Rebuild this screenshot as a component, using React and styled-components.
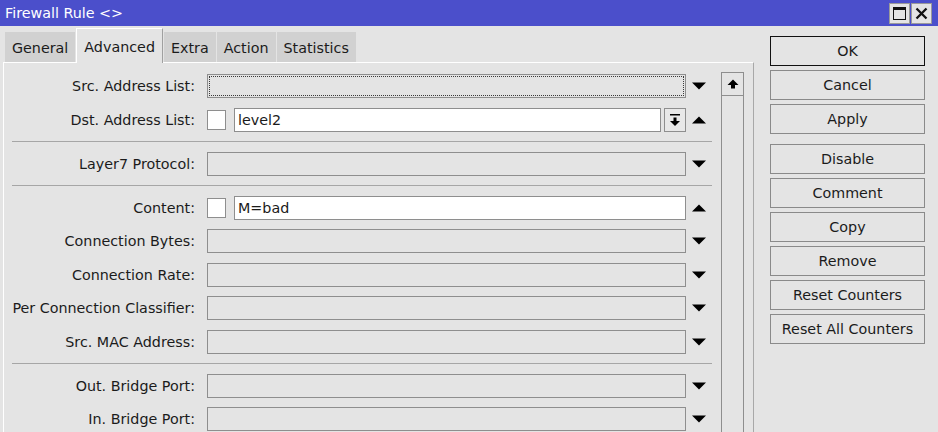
import React from "react";
import styled, { createGlobalStyle } from "styled-components";

const GlobalStyle = createGlobalStyle`
  * { box-sizing: border-box; }
  html, body { margin: 0; padding: 0; background: #e4e4e4; }
  body {
    font-family: "DejaVu Sans", Verdana, sans-serif;
    font-size: 14.3px;
    color: #1b1b1b;
  }
`;

const Window = styled.div`
  width: 938px;
  height: 432px;
  overflow: hidden;
  display: flex;
  flex-direction: column;
  background: #e4e4e4;
`;

const TitleBar = styled.div`
  flex: none;
  height: 26px;
  display: flex;
  align-items: center;
  justify-content: space-between;
  padding: 0 6px 0 5px;
  background: #4b4fcb;
`;

const Title = styled.span`
  color: #fff;
  font-size: 14.3px;
`;

const Controls = styled.div`
  display: flex;
  gap: 1px;
  padding-top: 1px;
`;

const ControlButton = styled.div`
  width: 21px;
  height: 21px;
  display: flex;
  align-items: center;
  justify-content: center;
  background: #e4e4e4;
  border: 1px solid #9a9a9a;
`;

const Body = styled.div`
  flex: 1;
  min-height: 0;
  display: flex;
  padding-left: 3px;
`;

const Main = styled.div`
  flex: none;
  width: 751px;
  display: flex;
  flex-direction: column;
`;

const Tabs = styled.div`
  position: relative;
  z-index: 1;
  height: 35px;
  margin: 2px 0 -1px;
  padding-left: 2px;
  display: flex;
  align-items: flex-end;
`;

const Tab = styled.div`
  height: ${(p) => (p.$active ? "35px" : "30px")};
  margin: 0 1px ${(p) => (p.$active ? "0" : "1px")} 0;
  padding: ${(p) => (p.$active ? "1px 7px 0" : "2px 7px 0")};
  display: flex;
  align-items: center;
  background: ${(p) => (p.$active ? "#e4e4e4" : "#d1d1d1")};
  border-top: ${(p) => (p.$active ? "1px solid #fff" : "none")};
  border-left: ${(p) => (p.$active ? "1px solid #fff" : "none")};
  border-right: ${(p) => (p.$active ? "1px solid #a0a0a0" : "none")};
  white-space: nowrap;
`;

const Panel = styled.div`
  flex: 1;
  min-height: 0;
  display: flex;
  padding-right: 9px;
  border-top: 1px solid #fff;
  border-left: 1px solid #fff;
  border-right: 1px solid #a8a8a8;
`;

const Form = styled.div`
  flex: none;
  width: 713px;
  padding-top: 11px;
  display: flex;
  flex-direction: column;
`;

const Group = styled.div`
  display: flex;
  flex-direction: column;
  gap: 9.5px;
`;

const Separator = styled.div`
  height: 1px;
  margin: 9.5px 5px 9.5px 8px;
  background: #a6a6a6;
`;

const RowBox = styled.div`
  height: 24px;
  display: flex;
  align-items: center;
`;

const Label = styled.div`
  flex: none;
  width: 191px;
  margin-right: 12px;
  text-align: right;
  white-space: nowrap;
`;

const Fields = styled.div`
  flex: none;
  width: 479px;
  height: 24px;
  display: flex;
  align-items: center;
`;

const Field = styled.div`
  flex: 1;
  height: 24px;
  padding: 0 3px;
  display: flex;
  align-items: center;
  background: ${(p) => (p.$editable ? "#fff" : "#e4e4e4")};
  border: 1px solid #8e8e8e;
  outline: ${(p) => (p.$focused ? "1px dotted #3a3a3a" : "none")};
  outline-offset: -3px;
`;

const Check = styled.div`
  flex: none;
  width: 19px;
  height: 20px;
  margin-right: 8px;
  background: #fff;
  border: 1px solid #8e8e8e;
`;

const ListButton = styled.div`
  flex: none;
  width: 22px;
  height: 24px;
  margin-left: 3px;
  display: flex;
  align-items: center;
  justify-content: center;
  background: #e8e8e8;
  border: 1px solid #8e8e8e;
`;

const Slot = styled.div`
  flex: none;
  width: 26px;
  display: flex;
  justify-content: center;
`;

const ScrollBar = styled.div`
  flex: none;
  width: 23px;
  margin: 9px 0 0 4px;
  display: flex;
  flex-direction: column;
`;

const ScrollButton = styled.div`
  height: 24px;
  display: flex;
  align-items: center;
  justify-content: center;
  border: 1px solid #8e8e8e;
`;

const Track = styled.div`
  flex: 1;
  border-left: 1px solid #8e8e8e;
  border-right: 1px solid #8e8e8e;
`;

const Actions = styled.div`
  flex: none;
  width: 155px;
  margin-left: 16px;
  padding-top: 10px;
  display: flex;
  flex-direction: column;
  gap: 10px;
`;

const ButtonGroup = styled.div`
  display: flex;
  flex-direction: column;
  gap: 4px;
`;

const Button = styled.div`
  height: 30px;
  display: flex;
  align-items: center;
  justify-content: center;
  background: #e4e4e4;
  border: 1px solid ${(p) => (p.$default ? "#111" : "#8a8a8a")};
  white-space: nowrap;
`;

const Arrow = ({ up }) => (
  <svg width="14" height="8" viewBox="0 0 14 8">
    <path d={up ? "M0 7.5 L7 0.5 L14 7.5 Z" : "M0 0.5 L14 0.5 L7 7.5 Z"} fill="#000" />
  </svg>
);

const DropAllIcon = () => (
  <svg width="12" height="14" viewBox="0 0 12 14">
    <rect x="1" y="1" width="10" height="1.5" fill="#000" />
    <rect x="4.5" y="4.5" width="3" height="4" fill="#000" />
    <path d="M1 8 L11 8 L6 13 Z" fill="#000" />
  </svg>
);

const ScrollUpIcon = () => (
  <svg width="12" height="10" viewBox="0 0 12 10">
    <path d="M6 0.5 L11.5 6 L8 6 L8 9.5 L4 9.5 L4 6 L0.5 6 Z" fill="#000" />
  </svg>
);

const MaximizeIcon = () => (
  <svg width="13" height="13" viewBox="0 0 13 13">
    <rect x="0.5" y="0.5" width="12" height="12" fill="none" stroke="#111" />
    <rect x="0.5" y="0.5" width="12" height="2.5" fill="#111" />
  </svg>
);

const CloseIcon = () => (
  <svg width="13" height="13" viewBox="0 0 13 13">
    <path d="M1.5 1.5 L11.5 11.5 M11.5 1.5 L1.5 11.5" stroke="#111" strokeWidth="2.3" />
  </svg>
);

const Row = ({ label, arrow, children }) => (
  <RowBox>
    <Label>{label}</Label>
    <Fields>{children}</Fields>
    <Slot>{arrow && <Arrow up={arrow === "up"} />}</Slot>
  </RowBox>
);

const tabs = ["General", "Advanced", "Extra", "Action", "Statistics"];

const blankRows = [
  "Connection Bytes:",
  "Connection Rate:",
  "Per Connection Classifier:",
  "Src. MAC Address:",
];

export default function App() {
  return (
    <>
      <GlobalStyle />
      <Window>
        <TitleBar>
          <Title>Firewall Rule &lt;&gt;</Title>
          <Controls>
            <ControlButton>
              <MaximizeIcon />
            </ControlButton>
            <ControlButton>
              <CloseIcon />
            </ControlButton>
          </Controls>
        </TitleBar>
        <Body>
          <Main>
            <Tabs>
              {tabs.map((t) => (
                <Tab key={t} $active={t === "Advanced"}>
                  {t}
                </Tab>
              ))}
            </Tabs>
            <Panel>
              <Form>
                <Group>
                  <Row label="Src. Address List:" arrow="down">
                    <Field $focused />
                  </Row>
                  <Row label="Dst. Address List:" arrow="up">
                    <Check />
                    <Field $editable>level2</Field>
                    <ListButton>
                      <DropAllIcon />
                    </ListButton>
                  </Row>
                </Group>
                <Separator />
                <Group>
                  <Row label="Layer7 Protocol:" arrow="down">
                    <Field />
                  </Row>
                </Group>
                <Separator />
                <Group>
                  <Row label="Content:" arrow="up">
                    <Check />
                    <Field $editable>M=bad</Field>
                  </Row>
                  {blankRows.map((label) => (
                    <Row key={label} label={label} arrow="down">
                      <Field />
                    </Row>
                  ))}
                </Group>
                <Separator />
                <Group>
                  <Row label="Out. Bridge Port:" arrow="down">
                    <Field />
                  </Row>
                  <Row label="In. Bridge Port:" arrow="down">
                    <Field />
                  </Row>
                </Group>
              </Form>
              <ScrollBar>
                <ScrollButton>
                  <ScrollUpIcon />
                </ScrollButton>
                <Track />
              </ScrollBar>
            </Panel>
          </Main>
          <Actions>
            <ButtonGroup>
              <Button $default>OK</Button>
              <Button>Cancel</Button>
              <Button>Apply</Button>
            </ButtonGroup>
            <ButtonGroup>
              <Button>Disable</Button>
              <Button>Comment</Button>
              <Button>Copy</Button>
              <Button>Remove</Button>
              <Button>Reset Counters</Button>
              <Button>Reset All Counters</Button>
            </ButtonGroup>
          </Actions>
        </Body>
      </Window>
    </>
  );
}
